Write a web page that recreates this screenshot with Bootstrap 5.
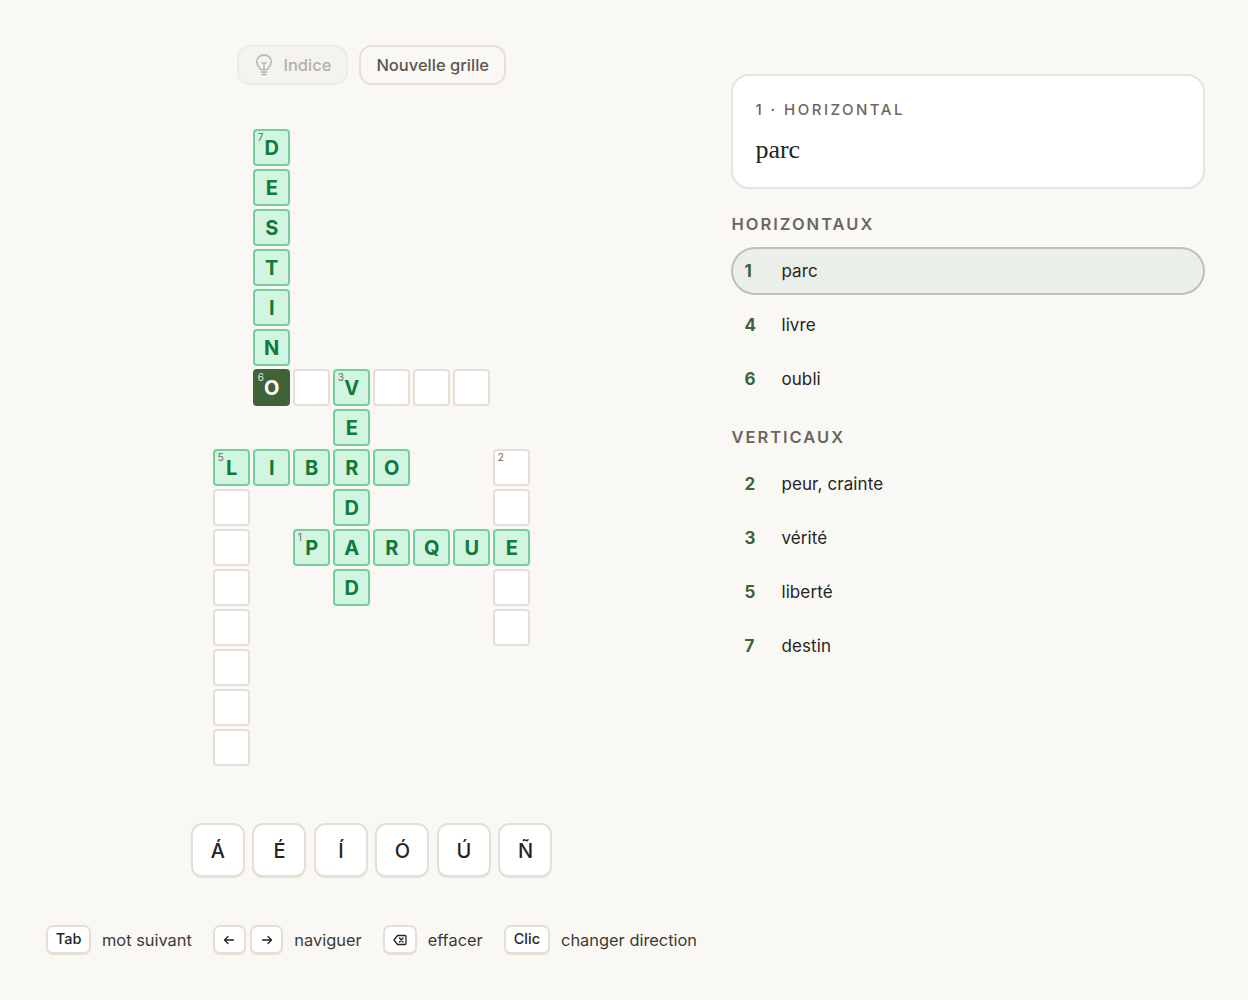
<!DOCTYPE html>
<html lang="fr">
<head>
<meta charset="utf-8">
<title>Mots croisés</title>
<link href="https://cdn.jsdelivr.net/npm/bootstrap@5.3.0/dist/css/bootstrap.min.css" rel="stylesheet">
<style>
html,body{height:1000px;overflow:hidden}
body{background:#faf8f5;font-family:Inter,"Liberation Sans",sans-serif;color:#26241f;font-size:16px}
.shell{padding:0 43px 0 40px;height:1000px;gap:28px}
.playcol{width:664px;padding-top:45px}
.sidecol{width:474px;padding-top:74px}
.tool-btn{height:40px;border:2px solid #e7dfd8;border-radius:13px;background:#faf8f5;color:#5c574f;font-weight:500;font-size:16.5px;padding:0 15px;display:flex;align-items:center;gap:9px;line-height:1}
.tool-btn:disabled{background:#f0eeea;border-color:#e0ddd5;color:#5c574f;opacity:.45}
.xgrid{display:grid;grid-template-columns:repeat(8,37px);grid-auto-rows:37px;gap:3px;margin-top:44px;width:318px}
.sq{position:relative;border-radius:4px;display:flex;align-items:center;justify-content:center;font-weight:700;font-size:20px;line-height:1;background:#fff;border:2px solid #e5dfd6;color:#0f7a3a;padding-left:1px}
.sq.ok{background:#d2f5e2;border-color:#74cf9c}
.sq.cur{background:#3f6337;border-color:#3f6337;color:#fff}
.sq.gap{background:none;border:0}
.sq sup{position:absolute;top:1px;left:3px;font-size:10px;font-weight:400;line-height:1;color:#6b665e;vertical-align:baseline}
.sq.cur sup{color:#e4ebe1}
.accents{margin-top:57px;gap:7.5px}
.acc-btn{width:54px;height:55px;padding:2px 0 0;border:2px solid #e5dfd6;border-bottom-width:3px;border-radius:11px;background:#fff;color:#26241f;font-size:20px;font-weight:500}
.hints{margin-top:47px;color:#3d3a34;white-space:nowrap;font-size:16.4px}
.hint-group{gap:11px;margin-right:21px}
.hint-group:last-child{margin-right:0}
.keycap{display:flex;align-items:center;justify-content:center;height:30px;min-width:33px;padding:0 8px;background:#fff;border:2px solid #e5dfd6;border-bottom-width:3px;border-radius:7px;color:#26241f;font-size:14.5px;font-weight:500;line-height:1}
.keycap.slim{padding:0 7.5px}
.keycap.tiny{padding:0;width:33px}
.keycap-pair{gap:4.5px}
.clue-card{border:2px solid #e8e3da;border-radius:18px;background:#fff;padding:24px 22px 21px;height:115px}
.clue-tag{font-size:15px;font-weight:500;letter-spacing:.165em;color:#6b665e;line-height:20px}
.clue-text{font-family:"Liberation Serif",serif;font-size:26px;line-height:30px;color:#26241f;margin-top:15px}
.sect{font-size:16.5px;font-weight:600;letter-spacing:.121em;color:#6b665e;line-height:20px;margin:0}
.sect.first{margin-top:25px;margin-bottom:13px}
.sect.second{margin-top:24px;margin-bottom:12.5px}
.clues{gap:6px;background:none;border-radius:0}
.clues .list-group-item{display:flex;align-items:center;height:48px;padding:2px 11px 0;border:2px solid transparent;border-radius:24px;background:none;color:#26241f;font-size:17px;letter-spacing:.1px;margin:0}
.clues .list-group-item.chosen{background:#ebefea;border-color:#bfc1b1;color:#26241f}
.clue-num{width:37px;font-weight:700;font-size:17px;color:#3f6337}
</style>
</head>
<body>
<div class="shell d-flex">
  <div class="playcol d-flex flex-column align-items-center">
    <div class="d-flex" style="gap:11px">
      <button class="btn tool-btn" disabled>
        <svg width="20" height="24" viewBox="0 0 20 24" fill="none" stroke="currentColor" stroke-width="1.400" stroke-linecap="round" stroke-linejoin="round"><path d="M6.800 16.600C6.400 14.700 2.700 13.300 2.700 9 2.700 5 6 2 10 2s7.300 3 7.300 7c0 4.300-3.700 5.700-4.100 7.600z"/><path d="M10 16.500V11M8 9.500l2 1.500 2-1.500M7.300 19h5.400M8 21.500h4"/></svg>
        Indice
      </button>
      <button class="btn tool-btn">Nouvelle grille</button>
    </div>
    <div class="xgrid">
      <div class="sq gap"></div><div class="sq ok"><sup>7</sup>D</div><div class="sq gap"></div><div class="sq gap"></div><div class="sq gap"></div><div class="sq gap"></div><div class="sq gap"></div><div class="sq gap"></div>
      <div class="sq gap"></div><div class="sq ok">E</div><div class="sq gap"></div><div class="sq gap"></div><div class="sq gap"></div><div class="sq gap"></div><div class="sq gap"></div><div class="sq gap"></div>
      <div class="sq gap"></div><div class="sq ok">S</div><div class="sq gap"></div><div class="sq gap"></div><div class="sq gap"></div><div class="sq gap"></div><div class="sq gap"></div><div class="sq gap"></div>
      <div class="sq gap"></div><div class="sq ok">T</div><div class="sq gap"></div><div class="sq gap"></div><div class="sq gap"></div><div class="sq gap"></div><div class="sq gap"></div><div class="sq gap"></div>
      <div class="sq gap"></div><div class="sq ok">I</div><div class="sq gap"></div><div class="sq gap"></div><div class="sq gap"></div><div class="sq gap"></div><div class="sq gap"></div><div class="sq gap"></div>
      <div class="sq gap"></div><div class="sq ok">N</div><div class="sq gap"></div><div class="sq gap"></div><div class="sq gap"></div><div class="sq gap"></div><div class="sq gap"></div><div class="sq gap"></div>
      <div class="sq gap"></div><div class="sq cur"><sup>6</sup>O</div><div class="sq"></div><div class="sq ok"><sup>3</sup>V</div><div class="sq"></div><div class="sq"></div><div class="sq"></div><div class="sq gap"></div>
      <div class="sq gap"></div><div class="sq gap"></div><div class="sq gap"></div><div class="sq ok">E</div><div class="sq gap"></div><div class="sq gap"></div><div class="sq gap"></div><div class="sq gap"></div>
      <div class="sq ok"><sup>5</sup>L</div><div class="sq ok">I</div><div class="sq ok">B</div><div class="sq ok">R</div><div class="sq ok">O</div><div class="sq gap"></div><div class="sq gap"></div><div class="sq"><sup>2</sup></div>
      <div class="sq"></div><div class="sq gap"></div><div class="sq gap"></div><div class="sq ok">D</div><div class="sq gap"></div><div class="sq gap"></div><div class="sq gap"></div><div class="sq"></div>
      <div class="sq"></div><div class="sq gap"></div><div class="sq ok"><sup>1</sup>P</div><div class="sq ok">A</div><div class="sq ok">R</div><div class="sq ok">Q</div><div class="sq ok">U</div><div class="sq ok">E</div>
      <div class="sq"></div><div class="sq gap"></div><div class="sq gap"></div><div class="sq ok">D</div><div class="sq gap"></div><div class="sq gap"></div><div class="sq gap"></div><div class="sq"></div>
      <div class="sq"></div><div class="sq gap"></div><div class="sq gap"></div><div class="sq gap"></div><div class="sq gap"></div><div class="sq gap"></div><div class="sq gap"></div><div class="sq"></div>
      <div class="sq"></div><div class="sq gap"></div><div class="sq gap"></div><div class="sq gap"></div><div class="sq gap"></div><div class="sq gap"></div><div class="sq gap"></div><div class="sq gap"></div>
      <div class="sq"></div><div class="sq gap"></div><div class="sq gap"></div><div class="sq gap"></div><div class="sq gap"></div><div class="sq gap"></div><div class="sq gap"></div><div class="sq gap"></div>
      <div class="sq"></div><div class="sq gap"></div><div class="sq gap"></div><div class="sq gap"></div><div class="sq gap"></div><div class="sq gap"></div><div class="sq gap"></div><div class="sq gap"></div>
    </div>
    <div class="accents d-flex">
      <button class="btn acc-btn">Á</button><button class="btn acc-btn">É</button><button class="btn acc-btn">Í</button><button class="btn acc-btn">Ó</button><button class="btn acc-btn">Ú</button><button class="btn acc-btn">Ñ</button>
    </div>
    <div class="hints d-flex align-items-center">
      <div class="hint-group d-flex align-items-center"><span class="keycap slim">Tab</span><span>mot suivant</span></div>
      <div class="hint-group d-flex align-items-center">
        <span class="d-flex keycap-pair">
          <span class="keycap tiny"><svg width="12" height="12" viewBox="0 0 12 12" fill="none" stroke="currentColor" stroke-width="1.300" stroke-linecap="round" stroke-linejoin="round"><path d="M10.500 6h-9M5 2.500 1.500 6 5 9.500"/></svg></span>
          <span class="keycap tiny"><svg width="12" height="12" viewBox="0 0 12 12" fill="none" stroke="currentColor" stroke-width="1.300" stroke-linecap="round" stroke-linejoin="round"><path d="M1.500 6h9M7 2.500 10.500 6 7 9.500"/></svg></span>
        </span>
        <span>naviguer</span>
      </div>
      <div class="hint-group d-flex align-items-center">
        <span class="keycap tiny" style="width:34px"><svg width="14" height="12" viewBox="0 0 14 12" fill="none" stroke="currentColor" stroke-width="1.300" stroke-linecap="round" stroke-linejoin="round"><path d="M4.500 1.500H12a1 1 0 0 1 1 1v7a1 1 0 0 1-1 1H4.500L1 6z"/><path d="M6.500 4l3.500 4M10 4 6.500 8"/></svg></span>
        <span>effacer</span>
      </div>
      <div class="hint-group d-flex align-items-center"><span class="keycap">Clic</span><span>changer direction</span></div>
    </div>
  </div>
  <div class="sidecol">
    <div class="card clue-card">
      <div class="clue-tag">1 · HORIZONTAL</div>
      <div class="clue-text">parc</div>
    </div>
    <h2 class="sect first">HORIZONTAUX</h2>
    <div class="list-group clues">
      <div class="list-group-item chosen"><span class="clue-num">1</span><span>parc</span></div>
      <div class="list-group-item"><span class="clue-num">4</span><span>livre</span></div>
      <div class="list-group-item"><span class="clue-num">6</span><span>oubli</span></div>
    </div>
    <h2 class="sect second">VERTICAUX</h2>
    <div class="list-group clues">
      <div class="list-group-item"><span class="clue-num">2</span><span>peur, crainte</span></div>
      <div class="list-group-item"><span class="clue-num">3</span><span>vérité</span></div>
      <div class="list-group-item"><span class="clue-num">5</span><span>liberté</span></div>
      <div class="list-group-item"><span class="clue-num">7</span><span>destin</span></div>
    </div>
  </div>
</div>
<script src="https://cdn.jsdelivr.net/npm/bootstrap@5.3.0/dist/js/bootstrap.bundle.min.js"></script>
</body>
</html>
